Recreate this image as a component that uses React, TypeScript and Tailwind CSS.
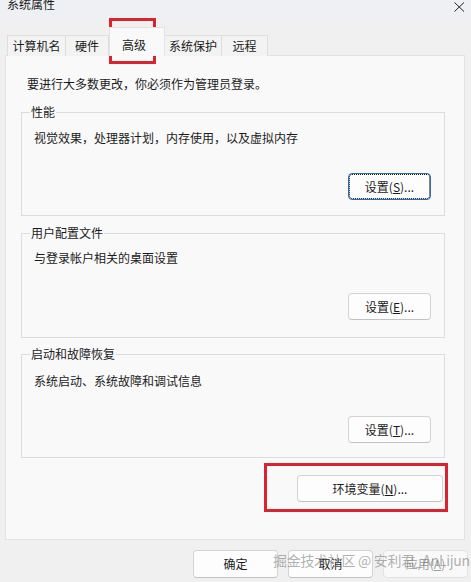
import React from "react";

const tabs = [
  { label: "计算机名", w: "w-[59px]" },
  { label: "硬件", w: "w-[43px]" },
  { label: "高级", w: "w-[56px]", active: true },
  { label: "系统保护", w: "w-[57px]" },
  { label: "远程", w: "w-[46px]" },
];

const groups = [
  { title: "性能", desc: "视觉效果，处理器计划，内存使用，以及虚拟内存", key: "S", focused: true, mt: "mt-[12px]", h: "h-[112px]", pt: "pt-[10px]" },
  { title: "用户配置文件", desc: "与登录帐户相关的桌面设置", key: "E", mt: "mt-[9px]", h: "h-[113px]", pt: "pt-[9px]" },
  { title: "启动和故障恢复", desc: "系统启动、系统故障和调试信息", key: "T", mt: "mt-[8px]", h: "h-[112px]", pt: "pt-[11px]" },
];

function WinButton({
  children,
  className = "",
  focused = false,
  disabled = false,
}: {
  children: React.ReactNode;
  className?: string;
  focused?: boolean;
  disabled?: boolean;
}) {
  return (
    <div
      className={
        "flex items-center justify-center rounded-[4px] border text-[12px] leading-[16px] " +
        (focused
          ? "border-[#2d6db0] bg-[#fdfdfd] outline-1 outline-dotted outline-[#111] -outline-offset-2 "
          : disabled
          ? "border-[#e2e2e2] bg-[#f9f9f9] text-[#9e9e9e] "
          : "border-[#d4d4d4] border-b-[#c2c2c2] bg-[#fdfdfd] text-[#1b1b1b] ") +
        className
      }
    >
      {children}
    </div>
  );
}

export default function App() {
  return (
    <div className="relative h-[582px] w-[471px] overflow-hidden bg-[#f0f0f0] font-['Noto_Sans_CJK_SC',sans-serif] text-[#1b1b1b]">
      {/* title bar */}
      <div className="flex h-[20px] items-start justify-between bg-[#eef0f3] pl-[7px] pr-[6px]">
        <span className="-mt-[4px] text-[12px] leading-[16px]">系统属性</span>
        <svg className="mt-[2px]" width="11" height="10" viewBox="0 0 11 10">
          <path d="M0.5 0.5 L10 9.5 M10 0.5 L0.5 9.5" stroke="#222" strokeWidth="1" fill="none" />
        </svg>
      </div>

      {/* tabs */}
      <div className="flex h-[36px] items-end pl-[7px]">
        {tabs.map((t) =>
          t.active ? (
            <div
              key={t.label}
              className={`relative z-10 flex h-[29px] ${t.w} items-start justify-start border border-b-0 border-[#e3e3e3] bg-[#f9f9f9] pl-[12px] pt-[9px] text-[12px] leading-[16px]`}
            >
              {t.label}
            </div>
          ) : (
            <div
              key={t.label}
              className={`flex h-[21px] ${t.w} items-center justify-center border border-b-0 border-l-0 border-[#dedede] bg-[#f3f3f3] text-[12px] leading-[16px] first:border-l`}
            >
              {t.label}
            </div>
          )
        )}
      </div>

      {/* panel */}
      <div className="ml-[5px] -mt-[1px] h-[485px] w-[460px] border border-[#e3e3e3] bg-[#f9f9f9] px-[15px] pt-[20px]">
        <p className="pl-[6px] text-[12px] leading-[16px]">要进行大多数更改，你必须作为管理员登录。</p>

        {groups.map((g) => (
          <fieldset
            key={g.title}
            className={`${g.mt} ${g.h} w-[424px] border border-[#dddddd] pl-[12px] pr-[13px]`}
          >
            <legend className="-ml-[4px] px-[1px] text-[12px] leading-[16px]">{g.title}</legend>
            <div className={`${g.pt} text-[12px] leading-[16px]`}>{g.desc}</div>
            <div className="mt-[27px] flex justify-end">
              <WinButton className="h-[27px] w-[83px]" focused={g.focused}>
                设置(<u>{g.key}</u>)...
              </WinButton>
            </div>
          </fieldset>
        ))}

        <div className="mt-[17px] flex w-[422px] justify-end">
          <WinButton className="h-[27px] w-[146px]">
            环境变量(<u>N</u>)...
          </WinButton>
        </div>
      </div>

      {/* footer buttons */}
      <div className="mt-[10px] flex justify-end gap-[10px] pr-[3px]">
        <WinButton className="h-[28px] w-[85px]">确定</WinButton>
        <WinButton className="h-[28px] w-[85px]">取消</WinButton>
        <WinButton className="h-[28px] w-[85px]" disabled>
          应用(<u>A</u>)
        </WinButton>
      </div>

      {/* annotation highlights */}
      <div className="pointer-events-none absolute left-[109px] top-[18px] h-[46px] w-[47px] border-[3px] border-[#d9232e]" />
      <div className="pointer-events-none absolute left-[264px] top-[463px] h-[49px] w-[184px] border-[3px] border-[#d9232e]" />

      {/* watermark */}
      <div className="pointer-events-none absolute left-[273px] top-[551px] whitespace-nowrap text-[14px] leading-[18px] tracking-[-0.3px] text-[#7d7d7d]/60">
        掘金技术社区 @ 安利君_AnLijun
      </div>
    </div>
  );
}
